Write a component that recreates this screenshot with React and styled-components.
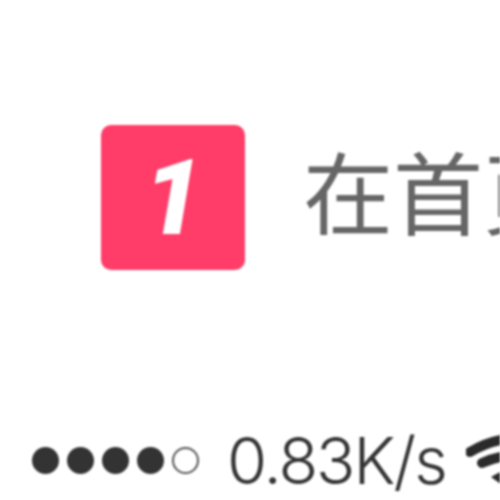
import React from "react";
import styled, { createGlobalStyle } from "styled-components";

const GlobalStyle = createGlobalStyle`
  html, body {
    margin: 0;
    padding: 0;
    background: #fff;
  }
`;

const Page = styled.div`
  width: 500px;
  height: 500px;
  overflow: hidden;
  background: #fff;
  filter: blur(0.8px);
`;

const Hero = styled.div`
  display: flex;
  align-items: center;
  gap: 58px;
  height: 145px;
  margin-top: 125px;
  padding-left: 101px;
  white-space: nowrap;
`;

const Badge = styled.div`
  flex: none;
  width: 144px;
  height: 145px;
  border-radius: 10px;
  background: #ff3d68;
  color: #fff;
  display: flex;
  align-items: center;
  justify-content: center;
  font: italic 900 106px "Roboto", "Liberation Sans", sans-serif;
`;

const Title = styled.div`
  font: 400 90px "Noto Sans CJK SC", sans-serif;
  color: #666;
  line-height: 1;
  padding-bottom: 18px;
`;

const StatusBar = styled.div`
  display: flex;
  align-items: center;
  height: 70px;
  margin-top: 155px;
  padding-left: 32px;
  white-space: nowrap;
`;

const Signal = styled.div`
  display: flex;
  gap: 8px;
  margin-right: 28px;
`;

const Dot = styled.span`
  box-sizing: border-box;
  width: 27px;
  height: 27px;
  border-radius: 50%;
  background: ${(p) => (p.$empty ? "transparent" : "#333")};
  border: ${(p) => (p.$empty ? "2px solid #555" : "none")};
`;

const Speed = styled.div`
  font: 300 65px "Inter", "Liberation Sans", sans-serif;
  letter-spacing: -2px;
  color: #333;
  margin-right: 20px;
`;

const Wifi = () => (
  <svg width="100" height="70" viewBox="0 -8 100 70" style={{ flex: "none" }}>
    <path d="M4 19 Q50 -8 96 19" fill="none" stroke="#2b2b2b" strokeWidth="10" strokeLinecap="round" />
    <path d="M16 30 Q50 15 84 30" fill="none" stroke="#2b2b2b" strokeWidth="10" strokeLinecap="round" />
    <path d="M25 44 L50 62 L75 44 Q50 28 25 44Z" fill="#2b2b2b" />
  </svg>
);

export default function App() {
  return (
    <Page>
      <GlobalStyle />
      <Hero>
        <Badge>1</Badge>
        <Title>在首页</Title>
      </Hero>
      <StatusBar>
        <Signal>
          <Dot />
          <Dot />
          <Dot />
          <Dot />
          <Dot $empty />
        </Signal>
        <Speed>0.83K/s</Speed>
        <Wifi />
      </StatusBar>
    </Page>
  );
}
